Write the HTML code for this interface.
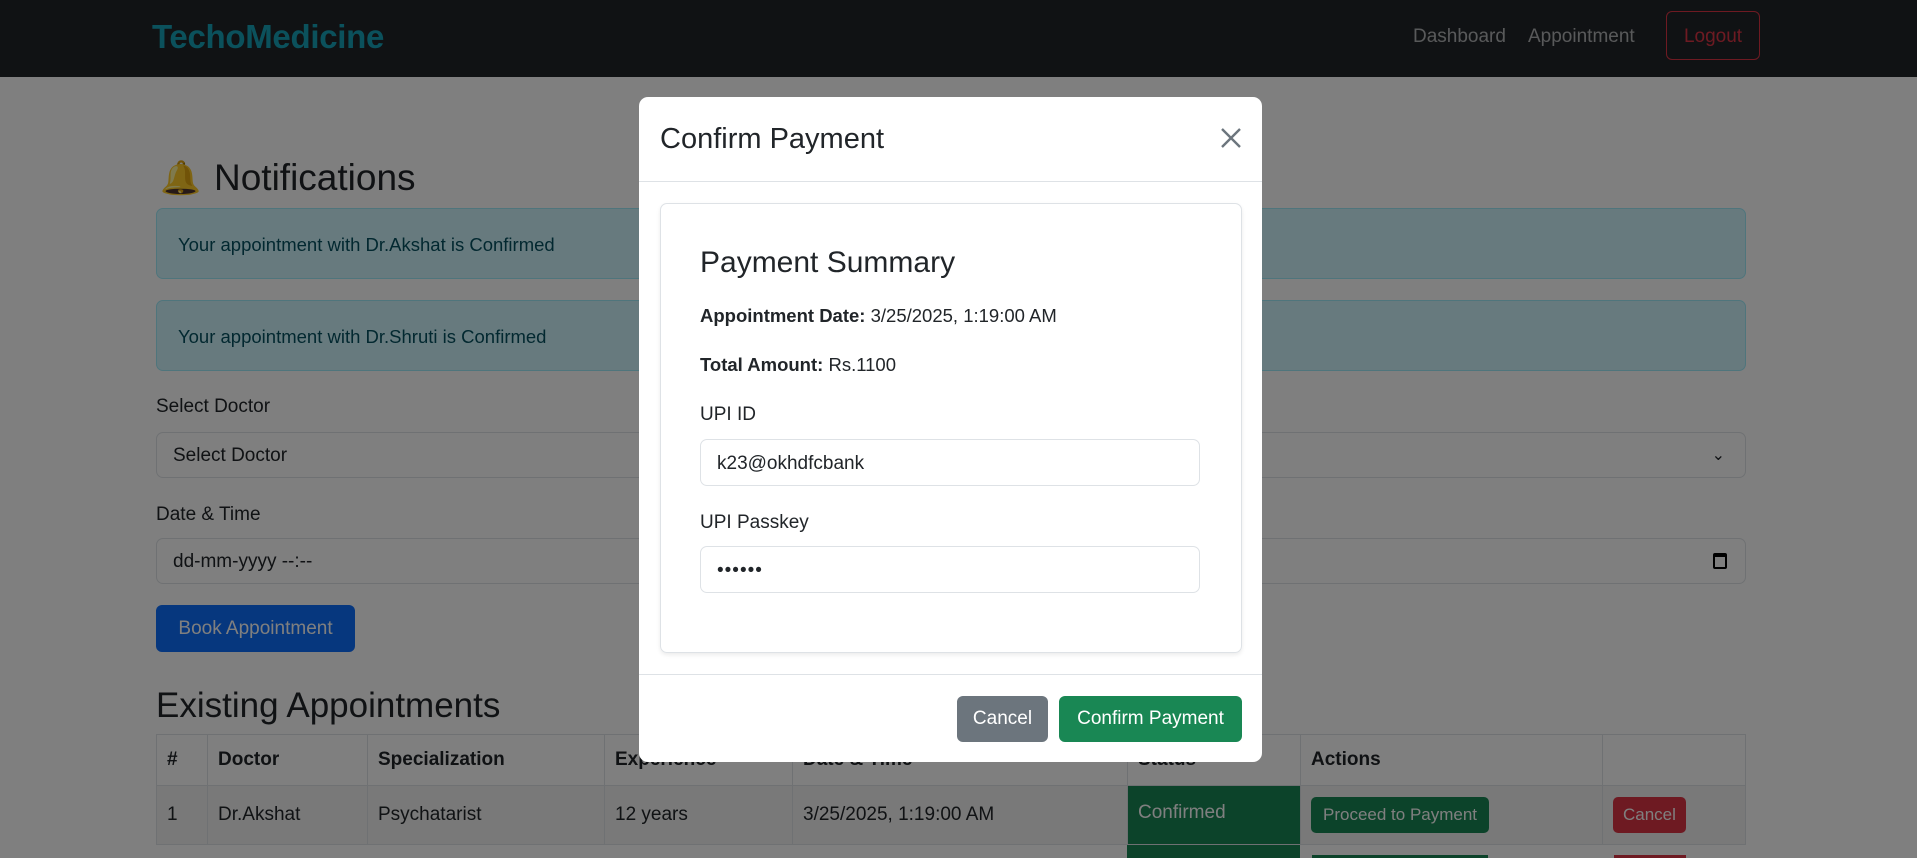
<!DOCTYPE html>
<html style="width:1917px;height:858px;overflow:hidden"><head><meta charset="utf-8"><style>
*{box-sizing:border-box;margin:0;padding:0}
body{width:1917px;height:858px;overflow:hidden;background:#fff;font-family:"Liberation Sans",sans-serif;color:#212529;font-size:19px}
#w{position:relative;width:1917px;height:858px;overflow:hidden}
.a{position:absolute}
.nav{left:0;top:0;width:1917px;height:77px;background:#212529}
.brand{left:152px;top:18px;font-size:33px;font-weight:bold;color:#17a2b8;letter-spacing:-0.3px}
.nl{top:26px;font-size:19px;color:rgba(255,255,255,.65)}
.logout{left:1666px;top:11px;width:94px;height:49px;border:1px solid #dc3545;border-radius:6px;color:#dc3545;text-align:center;line-height:49px;font-size:19px}
.alert{left:156px;width:1590px;background:#cff4fc;border:1px solid #9eeaf9;border-radius:7px;color:#055160;padding-left:21px;font-size:18.5px}
.lbl{left:156px;font-size:19px}
.inp{left:156px;width:1590px;height:46px;border:1px solid #dee2e6;border-radius:7px;padding-left:16px;line-height:46px;font-size:19px}
table{border-collapse:collapse;font-size:19px}
td,th{border:1px solid #dee2e6;text-align:left;padding:0 10px;vertical-align:middle}
th{height:51px}
td{height:59px}
.ov{left:0;top:0;width:1917px;height:858px;background:rgba(0,0,0,.5)}
.modal{left:639px;top:97px;width:623px;height:665px;background:#fff;border-radius:9px}
.mi{left:700px;width:500px;height:47px;border:1px solid #dee2e6;border-radius:7px;padding-left:16px;line-height:47px;font-size:19px}
.btn{border-radius:6px;color:#fff;text-align:center;font-size:19px}
</style></head><body><div id="w">
<div class="a nav"></div>
<div class="a brand">TechoMedicine</div>
<div class="a nl" style="left:1413px">Dashboard</div>
<div class="a nl" style="left:1528px">Appointment</div>
<div class="a logout">Logout</div>

<div class="a" style="left:160px;top:159px;font-size:33px;color:#e0a020">🔔</div>
<div class="a" style="left:214px;top:157px;font-size:37px;font-weight:500">Notifications</div>
<div class="a alert" style="top:208px;height:71px;line-height:71px">Your appointment with Dr.Akshat is Confirmed</div>
<div class="a alert" style="top:300px;height:71px;line-height:71px">Your appointment with Dr.Shruti is Confirmed</div>
<div class="a lbl" style="top:396px">Select Doctor</div>
<div class="a inp" style="top:432px">Select Doctor<span style="position:absolute;right:20px;top:0;font-size:16px">&#8964;</span></div>
<div class="a lbl" style="top:504px">Date &amp; Time</div>
<div class="a inp" style="top:538px">dd-mm-yyyy --:--<span style="position:absolute;right:18px;top:14px;width:14px;height:16px;border:2px solid #000;border-top-width:4px;border-radius:2px"></span></div>
<div class="a btn" style="left:156px;top:605px;width:199px;height:47px;line-height:47px;background:#0d6efd">Book Appointment</div>
<div class="a" style="left:156px;top:686px;font-size:35px;font-weight:500">Existing Appointments</div>
<table class="a" style="left:156px;top:734px;width:1590px">
<tr><th style="width:51px">#</th><th style="width:160px">Doctor</th><th style="width:237px">Specialization</th><th style="width:188px">Experience</th><th style="width:335px">Date &amp; Time</th><th style="width:173px">Status</th><th style="width:302px">Actions</th><th></th></tr>
<tr style="background:#f2f2f2"><td>1</td><td>Dr.Akshat</td><td>Psychatarist</td><td>12 years</td><td>3/25/2025, 1:19:00 AM</td><td style="background:#198754;color:#fff;vertical-align:top;padding-top:16px">Confirmed</td><td><span style="display:inline-block;background:#198754;color:#fff;border-radius:5px;padding:8px 12px;font-size:17px">Proceed to Payment</span></td><td><span style="display:inline-block;background:#dc3545;color:#fff;border-radius:5px;padding:8px 10px;font-size:17px">Cancel</span></td></tr>
</table>
<div class="a" style="left:1127px;top:845px;width:173px;height:13px;background:#198754"></div>
<div class="a" style="left:1312px;top:855px;width:176px;height:3px;background:#198754"></div>
<div class="a" style="left:1614px;top:855px;width:72px;height:3px;background:#dc3545"></div>

<div class="a ov"></div>
<div class="a modal"></div>
<div class="a" style="left:660px;top:123px;font-size:29px;font-weight:500">Confirm Payment</div>
<svg class="a" style="left:1220px;top:127px" width="22" height="22" viewBox="0 0 22 22"><path d="M2 2L20 20M20 2L2 20" stroke="#6c757d" stroke-width="2.4"/></svg>
<div class="a" style="left:639px;top:181px;width:623px;height:1px;background:#dee2e6"></div>
<div class="a" style="left:660px;top:203px;width:582px;height:450px;border:1px solid #dee2e6;border-radius:7px;box-shadow:0 2px 4px rgba(0,0,0,.08)"></div>
<div class="a" style="left:700px;top:246px;font-size:30px;font-weight:500">Payment Summary</div>
<div class="a" style="left:700px;top:305px;font-size:18.5px"><b>Appointment Date:</b> 3/25/2025, 1:19:00 AM</div>
<div class="a" style="left:700px;top:354px;font-size:18.5px"><b>Total Amount:</b> Rs.1100</div>
<div class="a" style="left:700px;top:404px">UPI ID</div>
<div class="a mi" style="top:439px">k23@okhdfcbank</div>
<div class="a" style="left:700px;top:512px">UPI Passkey</div>
<div class="a mi" style="top:546px;letter-spacing:1px">••••••</div>
<div class="a" style="left:639px;top:674px;width:623px;height:1px;background:#dee2e6"></div>
<div class="a btn" style="left:957px;top:696px;width:91px;height:46px;line-height:46px;background:#6c757d">Cancel</div>
<div class="a btn" style="left:1059px;top:696px;width:183px;height:46px;line-height:46px;background:#198754">Confirm Payment</div>
</div></body></html>
